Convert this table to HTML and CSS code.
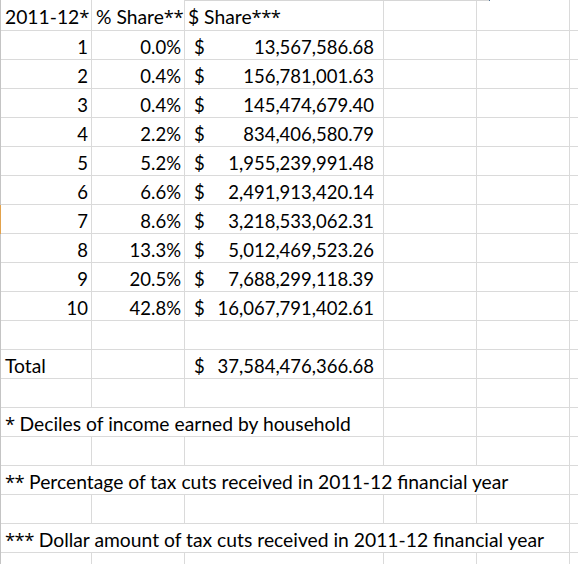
FILE: index.html
```html
<!DOCTYPE html>
<html>
<head>
<meta charset="utf-8">
<link rel="stylesheet" href="styles.css">
</head>
<body>
<div class="sheet">
  <div class="topline"></div>
  <div class="row head">
    <div class="c txt">2011-12<span class="ast">*</span></div>
    <div class="c txt hb">% Share<span class="ast">**</span></div>
    <div class="c txt hc">$ Share<span class="ast">***</span></div>
    <div class="c"></div><div class="c"></div><div class="c"></div>
  </div>
  <div class="row"><div class="c num">1</div><div class="c num">0.0%</div><div class="c acc"><span>$</span><span>13,567,586.68</span></div><div class="c"></div><div class="c"></div><div class="c"></div></div>
  <div class="row"><div class="c num">2</div><div class="c num">0.4%</div><div class="c acc"><span>$</span><span>156,781,001.63</span></div><div class="c"></div><div class="c"></div><div class="c"></div></div>
  <div class="row"><div class="c num">3</div><div class="c num">0.4%</div><div class="c acc"><span>$</span><span>145,474,679.40</span></div><div class="c"></div><div class="c"></div><div class="c"></div></div>
  <div class="row"><div class="c num">4</div><div class="c num">2.2%</div><div class="c acc"><span>$</span><span>834,406,580.79</span></div><div class="c"></div><div class="c"></div><div class="c"></div></div>
  <div class="row"><div class="c num">5</div><div class="c num">5.2%</div><div class="c acc"><span>$</span><span>1,955,239,991.48</span></div><div class="c"></div><div class="c"></div><div class="c"></div></div>
  <div class="row"><div class="c num">6</div><div class="c num">6.6%</div><div class="c acc"><span>$</span><span>2,491,913,420.14</span></div><div class="c"></div><div class="c"></div><div class="c"></div></div>
  <div class="row active"><div class="c num">7</div><div class="c num">8.6%</div><div class="c acc"><span>$</span><span>3,218,533,062.31</span></div><div class="c"></div><div class="c"></div><div class="c"></div></div>
  <div class="row"><div class="c num">8</div><div class="c num">13.3%</div><div class="c acc"><span>$</span><span>5,012,469,523.26</span></div><div class="c"></div><div class="c"></div><div class="c"></div></div>
  <div class="row"><div class="c num">9</div><div class="c num">20.5%</div><div class="c acc"><span>$</span><span>7,688,299,118.39</span></div><div class="c"></div><div class="c"></div><div class="c"></div></div>
  <div class="row"><div class="c num">10</div><div class="c num">42.8%</div><div class="c acc"><span>$</span><span>16,067,791,402.61</span></div><div class="c"></div><div class="c"></div><div class="c"></div></div>
  <div class="row"><div class="c"></div><div class="c"></div><div class="c"></div><div class="c"></div><div class="c"></div><div class="c"></div></div>
  <div class="row"><div class="c txt">Total</div><div class="c"></div><div class="c acc"><span>$</span><span>37,584,476,366.68</span></div><div class="c"></div><div class="c"></div><div class="c"></div></div>
  <div class="row"><div class="c"></div><div class="c"></div><div class="c"></div><div class="c"></div><div class="c"></div><div class="c"></div></div>
  <div class="row"><div class="c txt note span3"><span class="ast">*</span>&nbsp;Deciles of income earned by household</div><div class="c"></div><div class="c"></div><div class="c"></div></div>
  <div class="row"><div class="c"></div><div class="c"></div><div class="c"></div><div class="c"></div><div class="c"></div><div class="c"></div></div>
  <div class="row"><div class="c txt note span5"><span class="ast">**</span>&nbsp;Percentage of tax cuts received in 2011-12 financial year</div><div class="c"></div></div>
  <div class="row"><div class="c"></div><div class="c"></div><div class="c"></div><div class="c"></div><div class="c"></div><div class="c"></div></div>
  <div class="row"><div class="c txt note span5"><span class="ast">***</span>&nbsp;Dollar amount of tax cuts received in 2011-12 financial year</div><div class="c"></div></div>
  <div class="row last"><div class="c"></div><div class="c"></div><div class="c"></div><div class="c"></div><div class="c"></div><div class="c"></div></div>
</div>
</body>
</html>
```
FILE: styles.css
```css
html, body {
  margin: 0;
  padding: 0;
  background: #ffffff;
}
body {
  width: 578px;
  height: 564px;
  overflow: hidden;
}
.sheet {
  position: relative;
  font-family: Lato, "Open Sans", sans-serif;
  font-size: 18.5px;
  color: #000;
}
.topline {
  position: absolute;
  top: 0;
  left: 185px;
  width: 304px;
  height: 1px;
  background: #d6d6d6;
  border-right: 1px solid #4f7396;
}
.row {
  display: grid;
  grid-template-columns: 91px 93px 199px 93px 93px 1fr;
  height: 29px;
  box-sizing: border-box;
  border-left: 1px solid #c4c4c4;
}
.row.head {
  height: 31px;
}
.row.active {
  border-left-color: #e2a24c;
}
.row.last {
  height: 11px;
}
.c {
  box-sizing: border-box;
  border-right: 1px solid #dadada;
  border-bottom: 1px solid #dadada;
  display: flex;
  align-items: flex-end;
  line-height: 20px;
  padding-bottom: 2px;
  white-space: nowrap;
  min-width: 0;
}
.row.last .c {
  border-bottom: none;
}
.c:last-child {
  border-right: none;
}
.head .c {
  padding-bottom: 3px;
}
.txt {
  padding-left: 4px;
  font-size: 19.3px;
}
.ast {
  font-family: "Open Sans", sans-serif;
  font-size: 18.5px;
  letter-spacing: -0.6px;
}
.hc {
  padding-left: 3px;
}
.num {
  justify-content: flex-end;
  padding-right: 3px;
}
.acc {
  justify-content: space-between;
  padding-left: 9px;
  padding-right: 9px;
}
.span3 {
  grid-column: 1 / 4;
}
.span5 {
  grid-column: 1 / 6;
}
```
